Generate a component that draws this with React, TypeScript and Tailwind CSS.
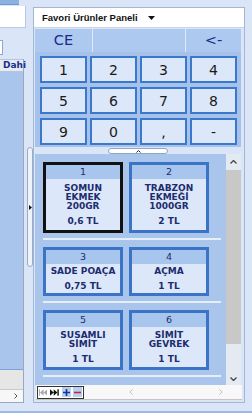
import React from "react";

type Product = { no: number; lines: string[]; price: string; selected?: boolean };

const rows: { height: string; items: Product[] }[] = [
  {
    height: "h-[71px]",
    items: [
      { no: 1, lines: ["SOMUN", "EKMEK", "200GR"], price: "0,6 TL", selected: true },
      { no: 2, lines: ["TRABZON", "EKMEĞİ", "1000GR"], price: "2 TL" },
    ],
  },
  {
    height: "h-[49px]",
    items: [
      { no: 3, lines: ["SADE POAÇA"], price: "0,75 TL" },
      { no: 4, lines: ["AÇMA"], price: "1 TL" },
    ],
  },
  {
    height: "h-[60px]",
    items: [
      { no: 5, lines: ["SUSAMLI", "SİMİT"], price: "1 TL" },
      { no: 6, lines: ["SİMİT", "GEVREK"], price: "1 TL" },
    ],
  },
];

const keys = ["1", "2", "3", "4", "5", "6", "7", "8", "9", "0", ",", "-"];

function ProductCard({ p, height }: { p: Product; height: string }) {
  return (
    <div
      className={`w-[80px] ${height} flex flex-col border-[3px] ${
        p.selected ? "border-[#111111]" : "border-[#3b74c6]"
      }`}
    >
      <div className="h-[14px] bg-[#a8c5ee] flex items-center justify-center text-[9.5px] leading-none text-[#1d2c6e]">
        {p.no}
      </div>
      <div className="flex-1 bg-[#dce8f9] flex flex-col items-center justify-center text-[9px] font-bold text-[#1d2c6e] leading-[9px] pt-[1px]">
        {p.lines.map((l) => (
          <div key={l} className="whitespace-nowrap">
            {l}
          </div>
        ))}
        <div className="mt-[6px] whitespace-nowrap">{p.price}</div>
      </div>
    </div>
  );
}

export default function App() {
  return (
    <div
      className="w-[252px] h-[413px] overflow-hidden bg-[#dae6f7] flex flex-col"
      style={{ fontFamily: '"DejaVu Sans", Verdana, sans-serif' }}
    >
      <div className="h-[403px] flex">
        {/* left grid panel (cut off) */}
        <div className="w-[26px] flex flex-col">
          <div className="h-[5px] w-[19px] bg-[#8db0e2] border-b border-[#6f97d3]" />
          <div className="mt-[1px] h-[22px] bg-white border-r border-b border-[#b8cae4]" />
          <div className="h-[12px]" />
          <div className="h-[15px] w-[3px] bg-white border-r border-y border-[#8fa9c8]" />
          <div className="h-[4px]" />
          <div className="w-[24px] flex-1 flex flex-col border-r border-b border-[#9aa8ba]">
            <div className="h-[13px] bg-[#e4ebf5] border-y border-[#b6c4d6] flex items-center pl-[3px] border-l-0">
              <span className="text-[9px] font-bold text-[#1b2f86] leading-none whitespace-nowrap">Dahi</span>
            </div>
            <div className="flex-1 bg-[#a9c5eb]" />
            <div className="h-[20px] bg-[#e6e6e6] border-t border-[#7fa2d6]" />
            <div className="h-[13px] bg-[#f7f7f7] border-t border-[#c9c9c9] flex items-center pl-[14px]">
              <svg width="4" height="6" viewBox="0 0 4 6">
                <path d="M0.5 0.5 L3 3 L0.5 5.5" fill="none" stroke="#555" strokeWidth="1" />
              </svg>
            </div>
          </div>
        </div>

        {/* splitter */}
        <div className="w-[7px] pl-[1px]">
          <div className="mt-[147px] h-[120px] w-[6px] rounded-full border border-[#9aaccc] bg-[#eef3fa] flex items-center justify-center">
            <svg width="3" height="5" viewBox="0 0 3 5">
              <path d="M0 0 L3 2.5 L0 5 Z" fill="#111" />
            </svg>
          </div>
        </div>

        {/* right favourites panel */}
        <div className="w-[212px] mt-[7px] border border-[#a3b6d3] flex flex-col">
          <div className="h-[20px] bg-white flex items-center pl-[8px] border-b border-[#c9d6ea]">
            <span
              className="text-[9.5px] font-bold text-[#111] leading-none"
              style={{ fontFamily: '"Liberation Sans", Arial, sans-serif' }}
            >
              Favori Ürünler Paneli
            </span>
            <svg className="ml-[10px]" width="7" height="4" viewBox="0 0 7 4">
              <path d="M0 0 L7 0 L3.5 4 Z" fill="#111" />
            </svg>
          </div>

          <div className="ml-[1px] mr-[3px] mt-[1px] flex flex-col">
            <div className="h-[23px] flex bg-[#adc9f0]">
              <div className="w-[58px] border-r border-[#dfe9f8] flex items-center justify-center text-[14.5px] text-[#1b2a8a] leading-none">
                CE
              </div>
              <div className="w-[93px] border-r border-[#dfe9f8]" />
              <div className="flex-1 flex items-center justify-center text-[14.5px] text-[#1b2a8a] leading-none">
                &lt;-
              </div>
            </div>

            <div className="h-[95px] bg-[#a6c2ea] pt-[4px] pl-[5px] grid grid-cols-[repeat(4,47px)] auto-rows-[27px] gap-x-[3px] gap-y-[4px]">
              {keys.map((k) => (
                <div
                  key={k}
                  className="border-2 border-[#3a78cc] bg-[#dce8f9] flex items-center justify-center text-[14px] text-[#1a1a1a] leading-none"
                >
                  {k}
                </div>
              ))}
            </div>

            <div className="h-[7px] flex justify-center items-end">
              <div className="w-[60px] h-[6px] rounded-[3px] border border-[#8ea6c6] bg-white flex justify-center items-center">
                <svg width="5" height="3" viewBox="0 0 5 3">
                  <path d="M0.5 2.5 L2.5 0.5 L4.5 2.5" fill="none" stroke="#222" strokeWidth="1" />
                </svg>
              </div>
            </div>

            <div className="h-[231px] flex">
              <div className="flex-1 bg-[#a9c5eb] pl-[8px] pt-[8px] pr-[5px]">
                {rows.map((r, i) => (
                  <div key={i}>
                    <div className="flex gap-[6px]">
                      {r.items.map((p) => (
                        <ProductCard key={p.no} p={p} height={r.height} />
                      ))}
                    </div>
                    <div className="mt-[5px] mb-[7px] h-[2px] bg-[#e6eefa]" />
                  </div>
                ))}
              </div>
              <div className="w-[15px] flex flex-col bg-[#e4eaf2]">
                <div className="h-[16px] flex items-center justify-center">
                  <svg width="7" height="4" viewBox="0 0 7 4">
                    <path d="M0.5 3.5 L3.5 0.5 L6.5 3.5" fill="none" stroke="#444" strokeWidth="1.3" />
                  </svg>
                </div>
                <div className="h-[174px] mx-[0px] bg-[#c8c8c8]" />
                <div className="flex-1 flex items-end justify-center pb-[4px]">
                  <svg width="7" height="4" viewBox="0 0 7 4">
                    <path d="M0.5 0.5 L3.5 3.5 L6.5 0.5" fill="none" stroke="#444" strokeWidth="1.3" />
                  </svg>
                </div>
              </div>
            </div>

            <div className="ml-[1px] -mr-[1px] h-[15px] bg-[#f8f8f8] flex items-center border-b border-[#c4c4c4]">
              <div className="ml-[1px] w-[47px] h-[13px] border border-[#333] bg-white flex items-center px-[1px] gap-[2px]">
                <svg width="9" height="7" viewBox="0 0 9 7">
                  <rect x="0" y="0" width="1" height="7" fill="#a8a8a8" />
                  <path d="M5 0 L1 3.5 L5 7 Z M9 0 L5 3.5 L9 7 Z" fill="#a8a8a8" />
                </svg>
                <svg className="ml-[1px]" width="10" height="7" viewBox="0 0 10 7">
                  <path d="M0 0 L4 3.5 L0 7 Z M4 0 L8 3.5 L4 7 Z" fill="#111" />
                  <rect x="8" y="0" width="1.5" height="7" fill="#111" />
                </svg>
                <div className="w-[10px] h-[10px] bg-[#b9d0f0] flex items-center justify-center">
                  <svg width="7" height="7" viewBox="0 0 7 7">
                    <path d="M3.5 0 V7 M0 3.5 H7" stroke="#16319a" strokeWidth="1.6" />
                  </svg>
                </div>
                <div className="w-[10px] h-[10px] bg-[#b9d0f0] flex items-center justify-center">
                  <svg width="7" height="7" viewBox="0 0 7 7">
                    <path d="M0 3.5 H7" stroke="#c8283a" strokeWidth="1.6" />
                  </svg>
                </div>
              </div>
              <div className="flex-1 flex items-center justify-between pl-[45px] pr-[19px]">
                <svg width="4" height="6" viewBox="0 0 4 6">
                  <path d="M3.5 0.5 L1 3 L3.5 5.5" fill="none" stroke="#bdbdbd" strokeWidth="1" />
                </svg>
                <svg width="4" height="6" viewBox="0 0 4 6">
                  <path d="M0.5 0.5 L3 3 L0.5 5.5" fill="none" stroke="#bdbdbd" strokeWidth="1" />
                </svg>
              </div>
            </div>
          </div>
        </div>
        <div className="flex-1" />
      </div>
      <div className="h-[8px]" />
      <div className="h-[2px] bg-[#9bb9e4]" />
    </div>
  );
}
